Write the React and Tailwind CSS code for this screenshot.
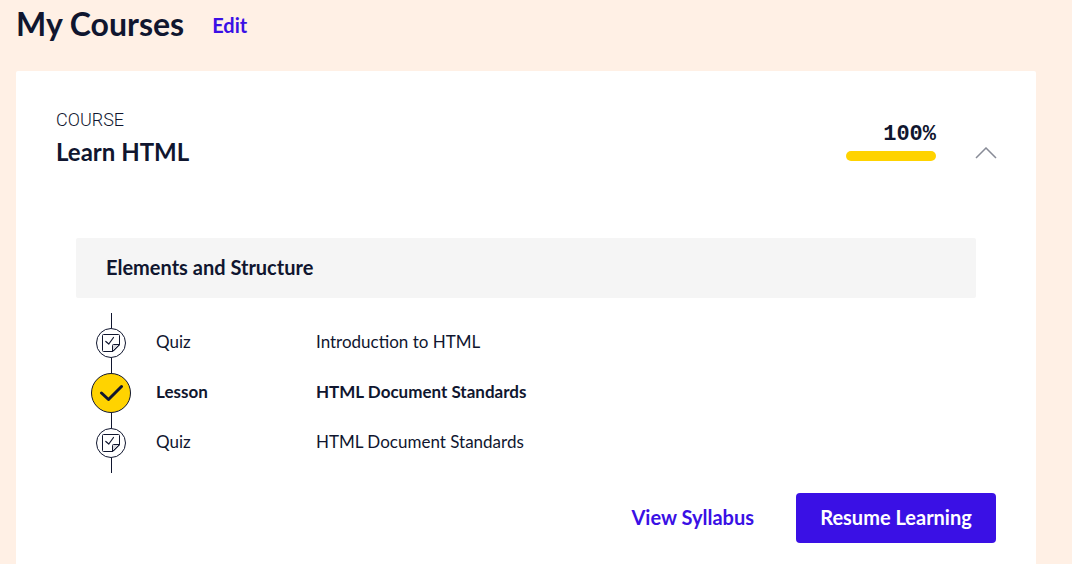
import React from "react";

const items = [
  { type: "Quiz", title: "Introduction to HTML" },
  { type: "Lesson", title: "HTML Document Standards", current: true },
  { type: "Quiz", title: "HTML Document Standards" },
];

function QuizIcon() {
  return (
    <span className="flex size-[30px] shrink-0 items-center justify-center rounded-full border border-[#10162f] bg-white">
      <svg aria-hidden="true" width="20" height="20" viewBox="0 0 20 20" fill="none" stroke="#10162f" strokeLinejoin="round">
        <path d="M2.5 1.5h15a1 1 0 0 1 1 1v9.500l-6.500 6.500h-9.500a1 1 0 0 1-1-1v-15a1 1 0 0 1 1-1z" />
        <path d="M18.500 11.500h-6a1 1 0 0 0-1 1v6z" fill="#d9dadf" />
        <path d="M4.800 8.500l3 2.500 4.700-6.500" strokeWidth="1.2" strokeLinecap="round" />
      </svg>
    </span>
  );
}

function DoneIcon() {
  return (
    <span className="flex size-10 shrink-0 items-center justify-center rounded-full border border-[#10162f] bg-[#ffd300]">
      <svg aria-hidden="true" width="24" height="18" viewBox="0 0 24 18" fill="none" stroke="#10162f" strokeWidth="3" strokeLinecap="round" strokeLinejoin="round">
        <path d="M2.500 9l7 6.500 13-13" />
      </svg>
    </span>
  );
}

function Connector() {
  return <span className="w-px flex-1 bg-[#10162f]" />;
}

function SyllabusItem({ type, title, current }) {
  return (
    <li className={`flex h-[50px] items-center text-[17px] ${current ? "font-bold" : "font-normal"}`}>
      <span className="flex w-10 flex-col items-center self-stretch">
        <Connector />
        {current ? <DoneIcon /> : <QuizIcon />}
        <Connector />
      </span>
      <span className="ml-[25px] w-40 pb-[2px]">{type}</span>
      <span className="pb-[2px]">{title}</span>
    </li>
  );
}

export default function App() {
  return (
    <main className="flex min-h-screen flex-col bg-[#fff0e5] pr-9 pl-4 font-['Lato',sans-serif] text-[#10162f]">
      <header className="flex h-[71px] items-start gap-7 pt-1">
        <h1 className="text-[32px] leading-10 font-bold">My Courses</h1>
        <button type="button" className="text-xl leading-[42px] font-bold text-[#3a10e5]">
          Edit
        </button>
      </header>

      <section className="flex flex-1 flex-col rounded-t-xs bg-white px-10 pt-9 pb-5">
        <div className="flex items-start justify-between">
          <div>
            <p className="font-['Roboto',sans-serif] text-lg leading-[26px] font-light">COURSE</p>
            <h2 className="mt-1 text-2xl leading-[30px] font-bold">Learn HTML</h2>
          </div>
          <div className="flex items-end gap-10 pt-4">
            <div className="w-[90px]">
              <p className="text-right font-['Liberation_Mono',monospace] text-[22px] leading-6 font-bold">100%</p>
              <div
                role="progressbar"
                aria-label="Course progress"
                aria-valuenow={100}
                className="mt-1 h-[10px] rounded-full bg-[#ffd300]"
              />
            </div>
            <button type="button" aria-label="Collapse course" className="flex h-4 w-5 items-center justify-center">
              <svg aria-hidden="true" width="22" height="12" viewBox="0 0 22 12" className="shrink-0" fill="none" stroke="#888b97" strokeWidth="1.5">
                <path d="M1 11L11 1l10 10" />
              </svg>
            </button>
          </div>
        </div>

        <h3 className="mt-[71px] mr-5 ml-5 rounded-xs bg-[#f5f5f5] px-[30px] pb-[2px] text-xl leading-[58px] font-bold">
          Elements and Structure
        </h3>

        <ul className="mt-[15px] ml-[35px] before:ml-5 before:block before:h-[5px] before:w-px before:bg-[#10162f] after:ml-5 after:block after:h-[5px] after:w-px after:bg-[#10162f]">
          {items.map((item, i) => (
            <SyllabusItem key={i} {...item} />
          ))}
        </ul>

        <div className="mt-5 flex items-center justify-end gap-[42px] text-xl font-bold">
          <a href="#syllabus" className="pb-[2px] text-[#3a10e5]">
            View Syllabus
          </a>
          <button type="button" className="h-[50px] w-[200px] rounded bg-[#3a10e5] pb-[2px] text-white">
            Resume Learning
          </button>
        </div>
      </section>
    </main>
  );
}
